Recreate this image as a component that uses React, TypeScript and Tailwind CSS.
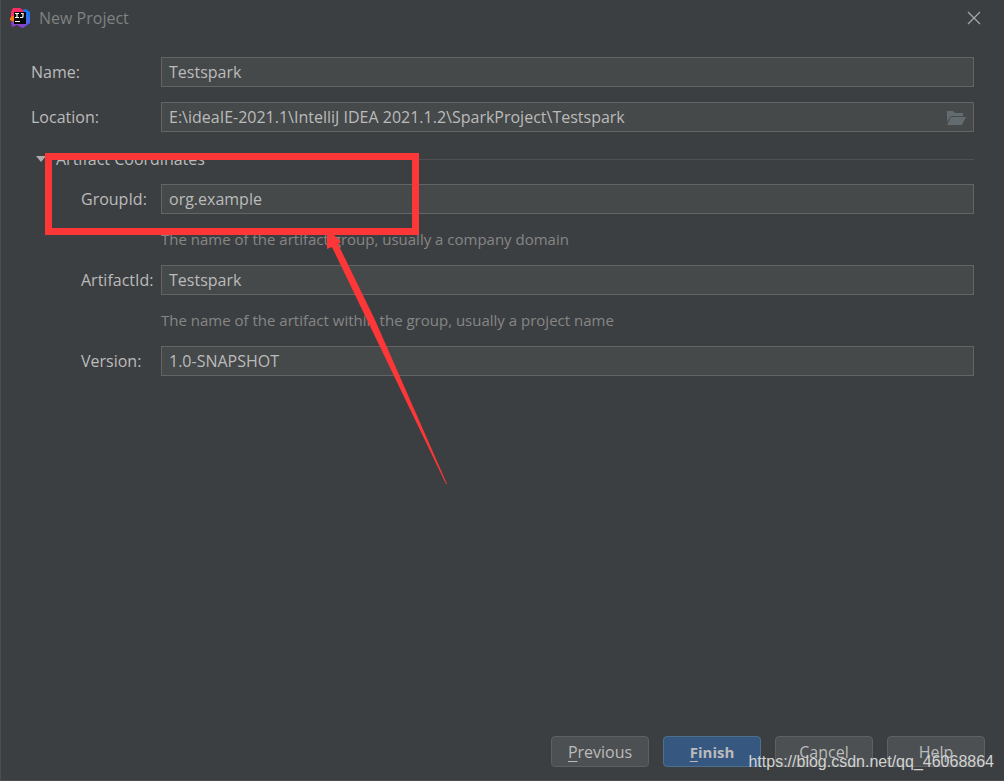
import type { ReactNode } from 'react';

const inputClass =
  'h-[30px] w-full min-w-0 border border-[#646464] bg-[#45494a] px-[7px] text-[#bbbbbb] outline-none';

function IdeaLogo() {
  return (
    <svg width="20" height="20" viewBox="0 0 20 20" aria-hidden="true">
      <defs>
        <linearGradient id="idea-blue" x1="0" y1="0" x2="0" y2="1">
          <stop offset="0" stopColor="#087cfa" />
          <stop offset="0.55" stopColor="#3d6ef0" />
          <stop offset="1" stopColor="#7a48e0" />
        </linearGradient>
        <linearGradient id="idea-pink" x1="0" y1="1" x2="1" y2="0">
          <stop offset="0" stopColor="#fe315d" />
          <stop offset="1" stopColor="#f5276b" />
        </linearGradient>
      </defs>
      <path d="M13 2 L16 1 L20 4 L20 15 L13 20 L10 16 Z" fill="url(#idea-blue)" />
      <path d="M3 0 L10 0 L14 3 L10 9 L1 9 L1 4 Z" fill="url(#idea-pink)" />
      <path d="M0 10 L2 8 L5 8 L5 15 L3 14 L0 12 Z" fill="#f97a12" />
      <path d="M1 14 L5 13 L12 15 L15 16 L12 20 L7 17 L2 19 Z" fill="#8a42c8" />
      <rect x="4" y="4" width="12" height="12" fill="#080808" />
      <path
        d="M5 5.5h4M7 5.5v4M5 9.5h4M11 5.5h2v3q0 1-1 1h-2"
        fill="none"
        stroke="#fff"
        strokeWidth="1.2"
      />
      <rect x="5" y="13" width="5" height="1" fill="#fff" />
    </svg>
  );
}

function FolderIcon() {
  return (
    <svg width="20" height="16" viewBox="0 0 20 16" fill="#616b70" aria-hidden="true">
      <path d="M1 1h6l2 2h8v3H5L1 12Z" />
      <path d="M5 7h15l-4 8H1Z" />
    </svg>
  );
}

type FieldProps = {
  id: string;
  label: string;
  value: string;
  nested?: boolean;
  hint?: string;
  children?: ReactNode;
};

function Field({ id, label, value, nested, hint, children }: FieldProps) {
  return (
    <div>
      <div className="flex items-center">
        <label htmlFor={id} className={nested ? 'w-[130px] shrink-0 pl-[50px]' : 'w-[130px] shrink-0'}>
          {label}
        </label>
        <div className="relative flex min-w-0 flex-1">
          <input id={id} type="text" defaultValue={value} className={inputClass} />
          {children}
        </div>
      </div>
      {hint && <p className="mt-[13px] mb-px ml-[130px] text-[15px] leading-6 text-[#868686]">{hint}</p>}
    </div>
  );
}

function Annotation() {
  return (
    <svg
      className="pointer-events-none absolute top-[153px] left-[44px]"
      width="404"
      height="334"
      viewBox="0 0 404 334"
      aria-hidden="true"
    >
      <rect x="3.5" y="3.5" width="367" height="75" fill="none" stroke="#fd3737" strokeWidth="7" />
      <path d="M282 80 L288 81 L296 89 L293 91 L330 167 L402 331 L401 331 L287 94 L282 96 Z" fill="#fd3737" />
    </svg>
  );
}

export default function App() {
  const buttonClass =
    'h-[31px] w-[98px] rounded-[4px] border border-[#5e6060] bg-[#4c5052] text-[#bbbbbb]';

  return (
    <div className="relative flex min-h-screen flex-col border-b border-l border-[#4b4e50] bg-[#3c3f41] font-['Open_Sans','Noto_Sans',sans-serif] text-[16px] leading-6 text-[#bbbbbb]">
      <header className="flex h-9 items-center justify-between pr-[23px] pl-[9px]">
        <div className="flex items-center gap-[9px]">
          <IdeaLogo />
          <h1 className="text-[#7f8283]">New Project</h1>
        </div>
        <button type="button" aria-label="Close">
          <svg width="14" height="14" viewBox="0 0 14 14" stroke="#a6a8a9" strokeWidth="1.2" aria-hidden="true">
            <path d="M1 1l12 12M13 1L1 13" />
          </svg>
        </button>
      </header>

      <main className="flex-1 pt-[21px] pr-[30px] pl-[30px]">
        <div className="flex flex-col gap-[15px]">
          <Field id="name" label="Name:" value="Testspark" />
          <Field
            id="location"
            label="Location:"
            value="E:\ideaIE-2021.1\IntelliJ IDEA 2021.1.2\SparkProject\Testspark"
          >
            <button type="button" aria-label="Browse" className="absolute top-[8px] right-[8px]">
              <FolderIcon />
            </button>
          </Field>
        </div>

        <button type="button" className="mt-[15px] flex h-6 w-full items-center pl-[5px]">
          <svg width="10" height="6" viewBox="0 0 10 6" fill="#adadad" aria-hidden="true">
            <path d="M0 0h10L5 6Z" />
          </svg>
          <span className="ml-[10px]">Artifact Coordinates</span>
          <span className="ml-2 h-px flex-1 bg-[#515151]" />
        </button>

        <div className="mt-[13px] flex flex-col gap-[13px]">
          <Field
            id="group-id"
            label="GroupId:"
            value="org.example"
            nested
            hint="The name of the artifact group, usually a company domain"
          />
          <Field
            id="artifact-id"
            label="ArtifactId:"
            value="Testspark"
            nested
            hint="The name of the artifact within the group, usually a project name"
          />
          <Field id="version" label="Version:" value="1.0-SNAPSHOT" nested />
        </div>
      </main>

      <footer className="flex justify-end gap-[14px] pr-[19px] pb-[13px]">
        <button type="button" className={buttonClass}>
          <span className="underline underline-offset-3">P</span>revious
        </button>
        <button
          type="button"
          className="h-[31px] w-[98px] rounded-[4px] border border-[#4c708c] bg-[#365880] text-[15px] font-bold text-[#bbbbbb]"
        >
          <span className="underline underline-offset-3">F</span>inish
        </button>
        <button type="button" className={buttonClass}>
          Cancel
        </button>
        <button type="button" className={buttonClass}>
          Help
        </button>
      </footer>

      <Annotation />
      <p className="pointer-events-none absolute right-[10px] bottom-[6px] font-['Liberation_Sans',Arial,sans-serif] text-[16px] leading-6 text-[#d2d3d3]">
        https://blog.csdn.net/qq_46068864
      </p>
    </div>
  );
}
